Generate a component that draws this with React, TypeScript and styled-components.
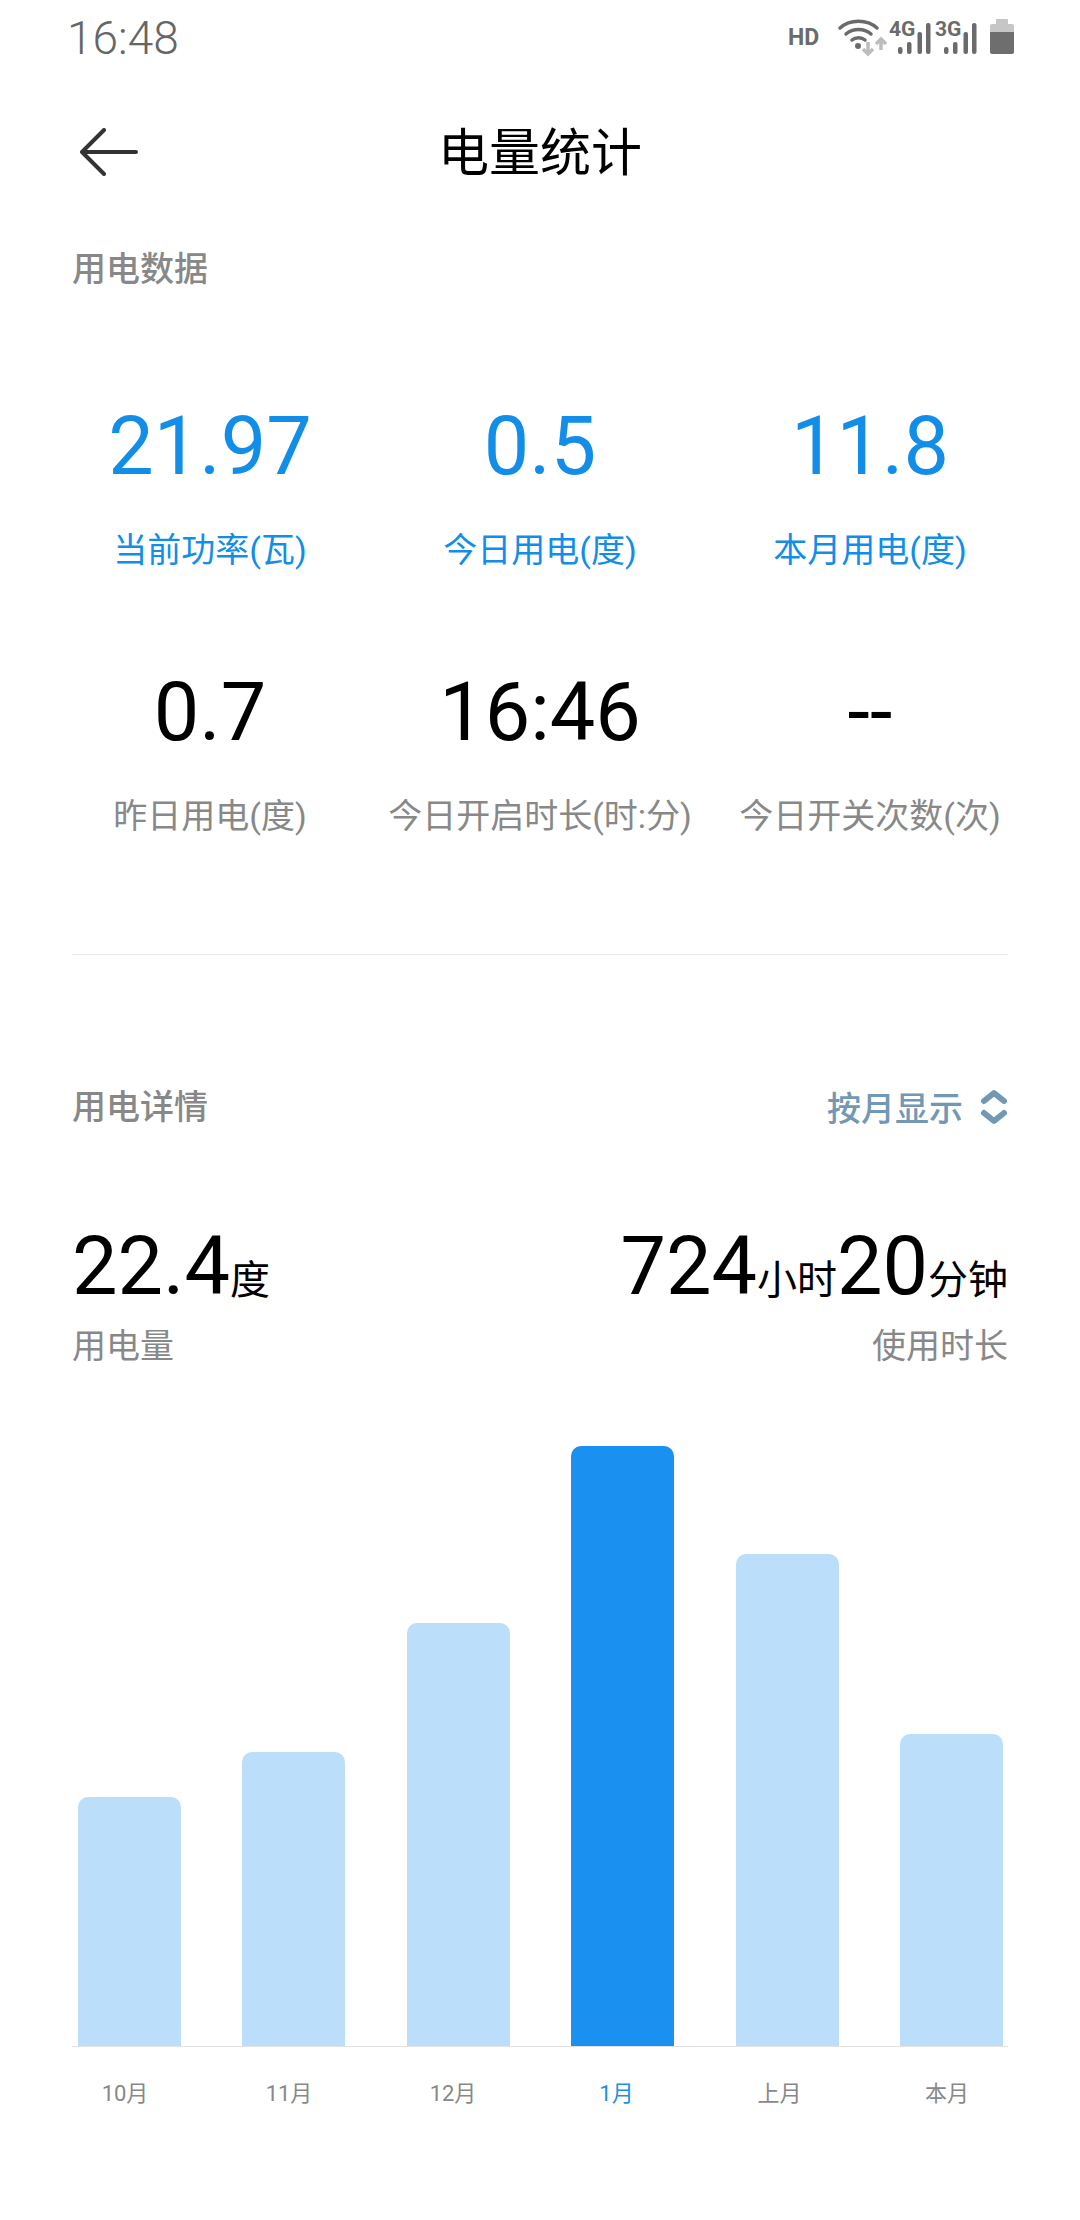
import React from "react";
import styled, { createGlobalStyle } from "styled-components";

const GlobalStyle = createGlobalStyle`
  html, body {
    margin: 0;
    padding: 0;
    background: #fff;
  }
  body {
    font-family: Roboto, "Noto Sans CJK SC", sans-serif;
  }
`;

const Page = styled.div`
  width: 1080px;
  height: 2220px;
  display: flex;
  flex-direction: column;
  overflow: hidden;
`;

const StatusBar = styled.div`
  height: 76px;
  padding: 0 60px 0 67px;
  display: flex;
  align-items: center;
  justify-content: space-between;
`;

const Clock = styled.span`
  font-size: 46px;
  font-weight: 300;
  color: #666;
`;

const StatusIcons = styled.svg`
  display: block;
`;

const TitleBar = styled.div`
  height: 152px;
  padding-left: 80px;
  display: flex;
  align-items: center;
  position: relative;
`;

const BackIcon = styled.svg`
  display: block;
`;

const Title = styled.h1`
  position: absolute;
  left: 0;
  right: 0;
  margin: 0;
  padding-bottom: 6px;
  text-align: center;
  font-size: 51px;
  font-weight: 400;
  color: #000;
`;

const Section = styled.section`
  padding: 21px 72px 0;
`;

const SectionLabel = styled.div`
  font-size: 34px;
  font-weight: 500;
  color: #888;
  line-height: 40px;
`;

const StatGrid = styled.div`
  display: grid;
  grid-template-columns: repeat(3, 330px);
  margin: 110px -27px 0;
  row-gap: 92px;
`;

const Stat = styled.div`
  display: flex;
  flex-direction: column;
  align-items: center;
`;

const StatValue = styled.div<{ $blue?: boolean }>`
  font-size: 81px;
  line-height: 96px;
  color: ${(p) => (p.$blue ? "#128ee9" : "#000")};
`;

const StatLabel = styled.div<{ $blue?: boolean }>`
  margin-top: 32px;
  font-size: 34px;
  line-height: 46px;
  white-space: nowrap;
  color: ${(p) => (p.$blue ? "#128ee9" : "#888")};
`;

const Divider = styled.div`
  height: 1px;
  margin-top: 115px;
  background: #e9e9e9;
`;

const DetailHead = styled.div`
  margin-top: 127px;
  display: flex;
  align-items: center;
  justify-content: space-between;
`;

const PeriodPicker = styled.div`
  display: flex;
  align-items: center;
  gap: 17px;
  font-size: 34px;
  font-weight: 500;
  color: #7398b3;
`;

const Totals = styled.div`
  margin-top: 92px;
  display: flex;
  justify-content: space-between;
`;

const Total = styled.div<{ $right?: boolean }>`
  display: flex;
  flex-direction: column;
  align-items: ${(p) => (p.$right ? "flex-end" : "flex-start")};
`;

const TotalValue = styled.div`
  font-size: 81px;
  line-height: 88px;
  color: #000;
  white-space: nowrap;
`;

const TotalUnit = styled.span`
  font-size: 40px;
`;

const TotalLabel = styled.div`
  margin-top: -1px;
  font-size: 34px;
  line-height: 44px;
  color: #888;
`;

const Chart = styled.div`
  margin-top: 78px;
  height: 600px;
  padding: 0 5px 0 6px;
  display: flex;
  align-items: flex-end;
  justify-content: space-between;
  border-bottom: 1px solid #e2e2e2;
`;

const Bar = styled.div<{ $active?: boolean; $height: number }>`
  width: 103px;
  height: ${(p) => p.$height}px;
  border-radius: 10px 10px 0 0;
  background: ${(p) => (p.$active ? "#1a91f0" : "#bbdefb")};
`;

const AxisLabels = styled.div`
  margin: 32px 0 0 -29px;
  display: grid;
  grid-template-columns: 164px 164px 164px 163px 163px 172px;
  justify-items: center;
`;

const AxisLabel = styled.span<{ $active?: boolean }>`
  font-size: 22px;
  line-height: 30px;
  color: ${(p) => (p.$active ? "#1a8fe8" : "#888")};
`;

const topStats = [
  { value: "21.97", label: "当前功率(瓦)", blue: true },
  { value: "0.5", label: "今日用电(度)", blue: true },
  { value: "11.8", label: "本月用电(度)", blue: true },
  { value: "0.7", label: "昨日用电(度)" },
  { value: "16:46", label: "今日开启时长(时:分)" },
  { value: "--", label: "今日开关次数(次)" },
];

const months = [
  { label: "10月", height: 249 },
  { label: "11月", height: 294 },
  { label: "12月", height: 423 },
  { label: "1月", height: 600, active: true },
  { label: "上月", height: 492 },
  { label: "本月", height: 312 },
];

function SignalIcon({ x, label }: { x: number; label: string }) {
  return (
    <g transform={`translate(${x} 0)`} fill="#6b6b6b">
      <text x="0" y="36" fontSize="21" fontWeight="700" fontFamily="Roboto, sans-serif">
        {label}
      </text>
      <rect x="9" y="47" width="4.5" height="7" rx="2" />
      <rect x="18" y="42" width="4.5" height="12" rx="2" />
      <rect x="28.5" y="32" width="4.5" height="22" rx="2" />
      <rect x="37" y="23" width="4.5" height="31" rx="2" />
    </g>
  );
}

export default function App() {
  return (
    <Page>
      <GlobalStyle />
      <StatusBar>
        <Clock>16:48</Clock>
        <StatusIcons width="240" height="76" viewBox="780 0 240 76">
          <text x="788" y="45" fontSize="23" fontWeight="700" fill="#6b6b6b" fontFamily="Roboto, sans-serif">
            HD
          </text>
          <g fill="none" stroke="#6b6b6b" strokeWidth="3.5" strokeLinecap="round">
            <path d="M840 28c10-9 27-9 37 0" />
            <path d="M846 34c7-6 18-6 25 0" />
            <path d="M852 40c3.500-3 9.500-3 13 0" />
          </g>
          <circle cx="858" cy="46" r="3" fill="#6b6b6b" />
          <g fill="none" stroke="#bdbdbd" strokeWidth="3.5">
            <path d="M868 42v12M863 49l5 5 5-5" />
            <path d="M881 50V39M876 44l5-5 5 5" />
          </g>
          <SignalIcon x={889} label="4G" />
          <SignalIcon x={935} label="3G" />
          <path d="M997 19h10a1 1 0 0 1 1 1v4h4a2 2 0 0 1 2 2v6h-24v-6a2 2 0 0 1 2-2h4v-4a1 1 0 0 1 1-1z" fill="#c6c6c6" />
          <path d="M990 32h24v20a2 2 0 0 1-2 2h-20a2 2 0 0 1-2-2z" fill="#6e6e6e" />
        </StatusIcons>
      </StatusBar>
      <TitleBar>
        <Title>电量统计</Title>
        <BackIcon width="58" height="48" viewBox="0 0 58 48">
          <path
            d="M56 24H2M24 2 2 24l22 22"
            fill="none"
            stroke="#333"
            strokeWidth="4"
            strokeLinecap="round"
            strokeLinejoin="round"
          />
        </BackIcon>
      </TitleBar>
      <Section>
        <SectionLabel>用电数据</SectionLabel>
        <StatGrid>
          {topStats.map((stat) => (
            <Stat key={stat.label}>
              <StatValue $blue={stat.blue}>{stat.value}</StatValue>
              <StatLabel $blue={stat.blue}>{stat.label}</StatLabel>
            </Stat>
          ))}
        </StatGrid>
        <Divider />
        <DetailHead>
          <SectionLabel>用电详情</SectionLabel>
          <PeriodPicker>
            按月显示
            <svg width="28" height="38" viewBox="0 0 28 38">
              <path
                d="M4 13 14 5l10 8M4 25l10 8 10-8"
                fill="none"
                stroke="#7398b3"
                strokeWidth="6"
                strokeLinecap="round"
                strokeLinejoin="round"
              />
            </svg>
          </PeriodPicker>
        </DetailHead>
        <Totals>
          <Total>
            <TotalValue>
              22.4<TotalUnit>度</TotalUnit>
            </TotalValue>
            <TotalLabel>用电量</TotalLabel>
          </Total>
          <Total $right>
            <TotalValue>
              724<TotalUnit>小时</TotalUnit>20<TotalUnit>分钟</TotalUnit>
            </TotalValue>
            <TotalLabel>使用时长</TotalLabel>
          </Total>
        </Totals>
        <Chart>
          {months.map((m) => (
            <Bar key={m.label} $active={m.active} $height={m.height} />
          ))}
        </Chart>
        <AxisLabels>
          {months.map((m) => (
            <AxisLabel key={m.label} $active={m.active}>
              {m.label}
            </AxisLabel>
          ))}
        </AxisLabels>
      </Section>
    </Page>
  );
}
